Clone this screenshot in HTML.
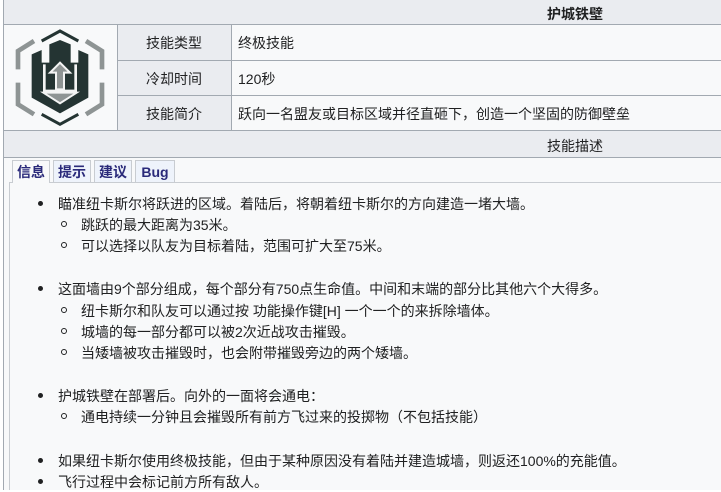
<!DOCTYPE html>
<html><head><meta charset="utf-8"><style>
*{margin:0;padding:0;box-sizing:border-box}
body{width:721px;height:490px;overflow:hidden;background:#fff;font-family:"Liberation Sans","Noto Sans CJK SC",sans-serif;font-size:14px;color:#202122;position:relative}
.a{position:absolute;white-space:nowrap;line-height:20px}
.bx{position:absolute;background:#f8f9fa}
.hd{position:absolute;background:#eaecf0}
.hl{position:absolute;height:1px;background:#a2a9b1}
.vl{position:absolute;width:1px;background:#a2a9b1}
.tab{position:absolute;top:160px;height:22px;border:1px solid #c8ccd1;border-bottom:none;background:#eef3fb;color:#2a2a7a;font-weight:bold;text-align:center;line-height:22px;font-size:14px}
.d{position:absolute;width:5px;height:5px;border-radius:50%;background:#202122}
.c{position:absolute;width:6px;height:6px;border-radius:50%;border:1px solid #202122}
</style></head><body>
<div class="hd" style="left:3px;top:0;width:718px;height:24px"></div>
<div class="bx" style="left:3px;top:25px;width:718px;height:105px"></div>
<div class="bx" style="left:117px;top:25px;width:114px;height:105px;background:#eaecf0"></div>
<div class="hd" style="left:3px;top:131px;width:718px;height:26px"></div>
<div class="bx" style="left:3px;top:158px;width:718px;height:332px"></div>
<div class="vl" style="left:3px;top:0;height:490px"></div>
<div class="hl" style="left:3px;top:24px;width:718px"></div>
<div class="hl" style="left:117px;top:60px;width:604px"></div>
<div class="hl" style="left:117px;top:95px;width:604px"></div>
<div class="hl" style="left:3px;top:130px;width:718px"></div>
<div class="hl" style="left:3px;top:157px;width:718px"></div>
<div class="vl" style="left:117px;top:24px;height:106px"></div>
<div class="vl" style="left:231px;top:24px;height:106px"></div>
<div class="a" style="left:547px;top:4px;font-weight:bold">护城铁壁</div>
<div class="a" style="left:146px;top:33px">技能类型</div>
<div class="a" style="left:146px;top:69px">冷却时间</div>
<div class="a" style="left:146px;top:104px">技能简介</div>
<div class="a" style="left:238px;top:33px">终极技能</div>
<div class="a" style="left:238px;top:69px">120秒</div>
<div class="a" style="left:238px;top:104px">跃向一名盟友或目标区域并径直砸下，创造一个坚固的防御壁垒</div>
<div class="a" style="left:547px;top:136px">技能描述</div>
<svg style="position:absolute;left:10px;top:26px" width="100" height="104" viewBox="0 0 300 312">
<polyline points="95,45 150,15 205,45" fill="none" stroke="#243433" stroke-width="9"/>
<polyline points="95,265 150,295 205,265" fill="none" stroke="#243433" stroke-width="9"/>
<polyline points="72,45 24,75 24,130" fill="none" stroke="#8e9494" stroke-width="14"/>
<polyline points="24,170 24,235 72,265" fill="none" stroke="#8e9494" stroke-width="14"/>
<polyline points="228,45 276,75 276,130" fill="none" stroke="#8e9494" stroke-width="14"/>
<polyline points="276,170 276,235 228,265" fill="none" stroke="#8e9494" stroke-width="14"/>
<polygon points="65,85 95,72 95,110 118,110 118,55 150,42 182,55 182,110 205,110 205,72 235,85 235,215 150,262 65,215" fill="#243433"/>
<polyline points="103,115 103,195 197,195 197,115" fill="none" stroke="#f3f4f4" stroke-width="8"/>
<polygon points="120,140 150,110 180,140 162,140 162,190 138,190 138,140" fill="#8e9494" stroke="#f3f4f4" stroke-width="6"/>
<polygon points="100,200 200,200 150,232" fill="#8e9494" stroke="#f3f4f4" stroke-width="6"/>
</svg>
<div style="position:absolute;left:9px;top:182px;width:712px;height:308px;background:#f8f9fa;border-left:1px solid #c8ccd1;border-top:1px solid #c8ccd1"></div>
<div class="tab" style="left:12px;width:38px;background:#f8f9fa;height:23px">信息</div>
<div class="tab" style="left:53px;width:38px">提示</div>
<div class="tab" style="left:94px;width:38px">建议</div>
<div class="tab" style="left:135px;width:40px">Bug</div>
<div class="d" style="left:38px;top:201px"></div><div class="a" style="left:58px;top:194px">瞄准纽卡斯尔将跃进的区域。着陆后，将朝着纽卡斯尔的方向建造一堵大墙。</div>
<div class="c" style="left:61px;top:221px"></div><div class="a" style="left:81px;top:215px">跳跃的最大距离为35米。</div>
<div class="c" style="left:61px;top:242px"></div><div class="a" style="left:81px;top:236px">可以选择以队友为目标着陆，范围可扩大至75米。</div>
<div class="d" style="left:38px;top:286px"></div><div class="a" style="left:58px;top:279px">这面墙由9个部分组成，每个部分有750点生命值。中间和末端的部分比其他六个大得多。</div>
<div class="c" style="left:61px;top:307px"></div><div class="a" style="left:81px;top:301px">纽卡斯尔和队友可以通过按 功能操作键[H] 一个一个的来拆除墙体。</div>
<div class="c" style="left:61px;top:328px"></div><div class="a" style="left:81px;top:322px">城墙的每一部分都可以被2次近战攻击摧毁。</div>
<div class="c" style="left:61px;top:349px"></div><div class="a" style="left:81px;top:343px">当矮墙被攻击摧毁时，也会附带摧毁旁边的两个矮墙。</div>
<div class="d" style="left:38px;top:393px"></div><div class="a" style="left:58px;top:386px">护城铁壁在部署后。向外的一面将会通电：</div>
<div class="c" style="left:61px;top:413px"></div><div class="a" style="left:81px;top:407px">通电持续一分钟且会摧毁所有前方飞过来的投掷物（不包括技能）</div>
<div class="d" style="left:38px;top:458px"></div><div class="a" style="left:58px;top:451px">如果纽卡斯尔使用终极技能，但由于某种原因没有着陆并建造城墙，则返还100%的充能值。</div>
<div class="d" style="left:38px;top:479px"></div><div class="a" style="left:58px;top:472px">飞行过程中会标记前方所有敌人。</div>
</body></html>
